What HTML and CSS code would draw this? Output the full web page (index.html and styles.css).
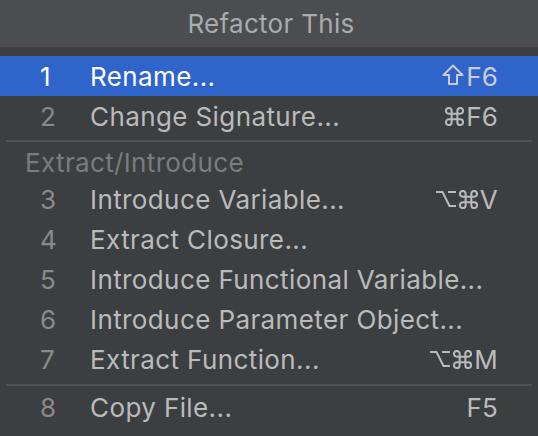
FILE: index.html
```html
<!DOCTYPE html>
<html>
<head>
<meta charset="utf-8">
<link rel="stylesheet" href="styles.css">
</head>
<body>
<div class="popup">
  <div class="title">Refactor This</div>
  <ul class="list">
    <li class="item selected"><span class="num">1</span><span class="label">Rename...</span><span class="key"><svg class="ico shift" viewBox="0 0 22 22"><path d="M11 1.5 L20.5 11 H15 V20 H7 V11 H1.5 Z"/></svg>F6</span></li>
    <li class="item"><span class="num">2</span><span class="label">Change Signature...</span><span class="key"><svg class="ico cmd" viewBox="2 2 20 20"><path d="M18 3a3 3 0 0 0-3 3v12a3 3 0 0 0 3 3 3 3 0 0 0 3-3 3 3 0 0 0-3-3H6a3 3 0 0 0-3 3 3 3 0 0 0 3 3 3 3 0 0 0 3-3V6a3 3 0 0 0-3-3 3 3 0 0 0-3 3 3 3 0 0 0 3 3h12a3 3 0 0 0 3-3 3 3 0 0 0-3-3z"/></svg>F6</span></li>
    <li class="sep sep-a"></li>
    <li class="group">Extract/Introduce</li>
    <li class="item"><span class="num">3</span><span class="label">Introduce Variable...</span><span class="key"><svg class="ico opt" viewBox="0 0 22 18"><path d="M1 2 H7.5 L14.5 16 H21 M13 2 H21"/></svg><svg class="ico cmd" viewBox="2 2 20 20"><path d="M18 3a3 3 0 0 0-3 3v12a3 3 0 0 0 3 3 3 3 0 0 0 3-3 3 3 0 0 0-3-3H6a3 3 0 0 0-3 3 3 3 0 0 0 3 3 3 3 0 0 0 3-3V6a3 3 0 0 0-3-3 3 3 0 0 0-3 3 3 3 0 0 0 3 3h12a3 3 0 0 0 3-3 3 3 0 0 0-3-3z"/></svg>V</span></li>
    <li class="item"><span class="num">4</span><span class="label">Extract Closure...</span><span class="key"></span></li>
    <li class="item"><span class="num">5</span><span class="label">Introduce Functional Variable...</span><span class="key"></span></li>
    <li class="item"><span class="num">6</span><span class="label">Introduce Parameter Object...</span><span class="key"></span></li>
    <li class="item"><span class="num">7</span><span class="label">Extract Function...</span><span class="key"><svg class="ico opt" viewBox="0 0 22 18"><path d="M1 2 H7.5 L14.5 16 H21 M13 2 H21"/></svg><svg class="ico cmd" viewBox="2 2 20 20"><path d="M18 3a3 3 0 0 0-3 3v12a3 3 0 0 0 3 3 3 3 0 0 0 3-3 3 3 0 0 0-3-3H6a3 3 0 0 0-3 3 3 3 0 0 0 3 3 3 3 0 0 0 3-3V6a3 3 0 0 0-3-3 3 3 0 0 0-3 3 3 3 0 0 0 3 3h12a3 3 0 0 0 3-3 3 3 0 0 0-3-3z"/></svg>M</span></li>
    <li class="sep sep-b"></li>
    <li class="item"><span class="num">8</span><span class="label">Copy File...</span><span class="key">F5</span></li>
  </ul>
</div>
</body>
</html>
```
FILE: styles.css
```css
html, body {
  margin: 0;
  padding: 0;
  background: #3c3f41;
}
body {
  font-family: Inter, "Noto Sans", "DejaVu Sans", sans-serif;
  font-size: 26px;
  color: #bbbbbb;
  width: 538px;
  height: 436px;
  overflow: hidden;
}
.popup {
  display: flex;
  flex-direction: column;
}
.title {
  height: 47px;
  background: #4b4d51;
  color: #a9abad;
  display: flex;
  align-items: center;
  justify-content: center;
  padding-left: 4px;
  letter-spacing: 0.3px;
}
.list {
  list-style: none;
  margin: 9px 0 0 0;
  padding: 0;
  display: flex;
  flex-direction: column;
}
.item {
  height: 40px;
  display: flex;
  align-items: center;
  padding: 0 40px 0 40px;
  letter-spacing: 0.4px;
}
.item.selected {
  background: #2f65ca;
  color: #ffffff;
}
.num {
  width: 50px;
  color: #8a8a8a;
}
.selected .num {
  color: #ffffff;
}
.label {
  flex: 1;
}
.key {
  color: #bbbbbb;
  display: flex;
  align-items: center;
  letter-spacing: 0.2px;
}
.selected .key {
  color: #c9ccd2;
}
.ico {
  fill: none;
  stroke: currentColor;
  stroke-width: 2;
  stroke-linejoin: round;
  margin-right: 2px;
}
.shift {
  width: 22px;
  height: 22px;
  margin-top: -2px;
}
.cmd {
  width: 19px;
  height: 19px;
  stroke-width: 2.1;
}
.opt {
  width: 22px;
  height: 18px;
  stroke-linejoin: miter;
}
.sep {
  height: 2px;
  margin: 4px 6px 4px 6px;
  background: #515355;
}
.sep-b {
  margin: 5px 6px 1px 6px;
}
.group {
  height: 33px;
  display: flex;
  align-items: center;
  padding-left: 25px;
  color: #7a7c7e;
  letter-spacing: 0.35px;
}
```
